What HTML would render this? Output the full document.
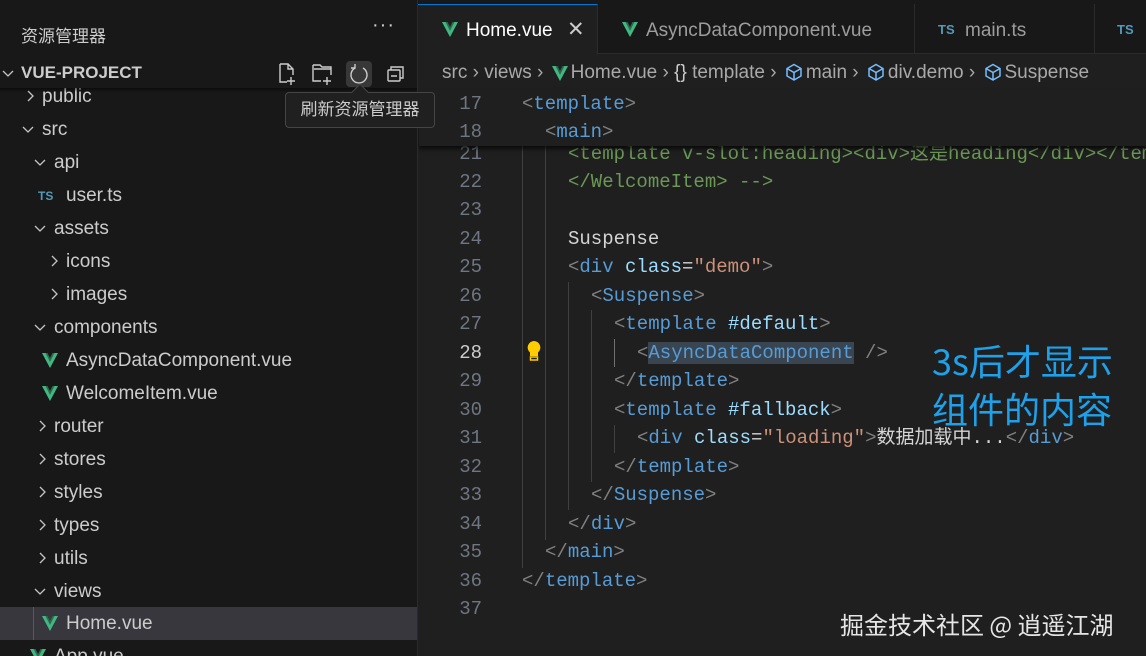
<!DOCTYPE html>
<html><head><meta charset="utf-8"><style>
*{margin:0;padding:0;box-sizing:border-box}
html,body{width:1146px;height:656px;overflow:hidden}
body{background:#1f1f1f;position:relative;font-family:"Liberation Sans","Noto Sans CJK SC",sans-serif;color:#cccccc}
.a{position:absolute;white-space:pre}
#side{position:absolute;left:0;top:0;width:418px;height:656px;background:#181818;border-right:1px solid #2b2b2b;overflow:hidden}
.row{position:absolute;left:0;width:417px;height:33px;line-height:33px;font-size:19px;color:#cccccc}
.chev{position:absolute;top:8px}
.ts{position:absolute;font-size:12px;font-weight:bold;color:#519aba;top:1px}
#ed{position:absolute;left:418px;top:0;width:728px;height:656px;overflow:hidden}
.code{position:absolute;left:0;height:28px;line-height:28px;font-family:"Liberation Mono","Noto Sans CJK SC",monospace;font-size:19px;white-space:pre}
.ln{position:absolute;width:64px;text-align:right;left:0;color:#6e7681}
.tx{position:absolute;left:104px;color:#d4d4d4}
.p{color:#808080}.t{color:#569cd6}.at{color:#9cdcfe}.s{color:#ce9178}.c{color:#6a9955}
.guide{position:absolute;width:1px;background:#404040}
.bi{display:inline-block;vertical-align:-3px;margin:0 3px}
</style></head><body>
<svg width="0" height="0" style="position:absolute"><defs>
<g id="vue"><polygon points="0,0 4,0 8,8 12,0 16,0 8,15" fill="#41b883"/><polygon points="3.5,0 5.5,0 8,5 10.5,0 12.5,0 8,9" fill="#2e6b4e"/></g>
<path id="cr" d="M6 3l5 5-5 5" fill="none" stroke="#c5c5c5" stroke-width="1.3"/>
<path id="cd" d="M3 6l5 5 5-5" fill="none" stroke="#c5c5c5" stroke-width="1.3"/>
<g id="cube" fill="none" stroke="#75beff" stroke-width="1.5"><path d="M9 1.5l7 4v7.5l-7 4-7-4V5.5zM2 5.5l7 4 7-4M9 9.5v7.5"/></g>
</defs></svg>

<div id="side">
<div class="a" style="left:21px;top:22px;font-size:17px;color:#cccccc">资源管理器</div>
<div class="a" style="left:372px;top:14px;font-size:20px;color:#cccccc;letter-spacing:1px">···</div>
<svg class="a" style="left:0;top:65px" width="16" height="16"><use href="#cd"/></svg>
<div class="a" style="left:21px;top:63px;font-size:17px;font-weight:bold;color:#cccccc">VUE-PROJECT</div>
<svg class="a" style="left:276px;top:61px" width="130" height="26" viewBox="0 0 130 26" fill="none" stroke="#cccccc" stroke-width="1.4">
<path d="M4 3h8l5 5v6M4 3v18h7M12 3v5h5M15 16v8M11 20h8"/>
<path d="M37 4h7l2 2h9v8M37 4v16h8M38 8h17M51 16v8M47 20h8"/>
<rect x="70" y="0" width="26" height="26" rx="4" fill="#383838" stroke="none"/>
<path d="M87 7a8 8 0 1 1-8 0M79 3v4h-4"/>
<rect x="112" y="9" width="12" height="11" rx="1"/><path d="M115 9V6h12v11h-3M115 15h6"/>
</svg>

<div class="row" style="top:80px"><svg class="chev" style="left:22px" width="16" height="16"><use href="#cr"/></svg><span class="a" style="left:42px">public</span></div>
<div class="row" style="top:113px"><svg class="chev" style="left:20px" width="16" height="16"><use href="#cd"/></svg><span class="a" style="left:42px">src</span></div>
<div class="row" style="top:146px"><svg class="chev" style="left:32px" width="16" height="16"><use href="#cd"/></svg><span class="a" style="left:54px">api</span></div>
<div class="row" style="top:179px"><span class="ts" style="left:38px">TS</span><span class="a" style="left:66px">user.ts</span></div>
<div class="row" style="top:212px"><svg class="chev" style="left:32px" width="16" height="16"><use href="#cd"/></svg><span class="a" style="left:54px">assets</span></div>
<div class="row" style="top:245px"><svg class="chev" style="left:46px" width="16" height="16"><use href="#cr"/></svg><span class="a" style="left:66px">icons</span></div>
<div class="row" style="top:278px"><svg class="chev" style="left:46px" width="16" height="16"><use href="#cr"/></svg><span class="a" style="left:66px">images</span></div>
<div class="row" style="top:311px"><svg class="chev" style="left:32px" width="16" height="16"><use href="#cd"/></svg><span class="a" style="left:54px">components</span></div>
<div class="row" style="top:344px"><svg class="a" style="left:42px;top:9px" width="16" height="15"><use href="#vue"/></svg><span class="a" style="left:66px">AsyncDataComponent.vue</span></div>
<div class="row" style="top:377px"><svg class="a" style="left:42px;top:9px" width="16" height="15"><use href="#vue"/></svg><span class="a" style="left:66px">WelcomeItem.vue</span></div>
<div class="row" style="top:410px"><svg class="chev" style="left:34px" width="16" height="16"><use href="#cr"/></svg><span class="a" style="left:54px">router</span></div>
<div class="row" style="top:443px"><svg class="chev" style="left:34px" width="16" height="16"><use href="#cr"/></svg><span class="a" style="left:54px">stores</span></div>
<div class="row" style="top:476px"><svg class="chev" style="left:34px" width="16" height="16"><use href="#cr"/></svg><span class="a" style="left:54px">styles</span></div>
<div class="row" style="top:509px"><svg class="chev" style="left:34px" width="16" height="16"><use href="#cr"/></svg><span class="a" style="left:54px">types</span></div>
<div class="row" style="top:542px"><svg class="chev" style="left:34px" width="16" height="16"><use href="#cr"/></svg><span class="a" style="left:54px">utils</span></div>
<div class="row" style="top:575px"><svg class="chev" style="left:32px" width="16" height="16"><use href="#cd"/></svg><span class="a" style="left:54px">views</span></div>
<div class="row" style="top:607px;background:#37373d"><span style="position:absolute;left:33px;top:0;width:1px;height:33px;background:#585858"></span><svg class="a" style="left:42px;top:9px" width="16" height="15"><use href="#vue"/></svg><span class="a" style="left:66px">Home.vue</span></div>
<div class="row" style="top:640px"><svg class="a" style="left:30px;top:9px" width="16" height="15"><use href="#vue"/></svg><span class="a" style="left:54px">App.vue</span></div>
<div style="position:absolute;left:0;top:88px;width:417px;height:4px;background:linear-gradient(#0008,#0000)"></div>
</div>

<div id="ed">
<!-- tabs -->
<div class="a" style="left:0;top:0;width:728px;height:54px;background:#181818;border-bottom:1px solid #2b2b2b"></div>
<div class="a" style="left:0;top:4px;width:180px;height:51px;background:#1f1f1f;border-top:1px solid #0078d4;border-right:1px solid #2b2b2b"></div>
<svg class="a" style="left:24px;top:22px" width="16" height="15"><use href="#vue"/></svg>
<div class="a" style="left:48px;top:20px;font-size:19px;color:#ffffff">Home.vue</div>
<div class="a" style="left:149px;top:17px;font-size:21px;color:#cccccc">✕</div>
<div class="a" style="left:180px;top:4px;width:317px;height:50px;border-right:1px solid #2b2b2b"></div>
<svg class="a" style="left:204px;top:22px" width="16" height="15"><use href="#vue"/></svg>
<div class="a" style="left:228px;top:20px;font-size:19px;color:#9d9d9d">AsyncDataComponent.vue</div>
<div class="a" style="left:497px;top:4px;width:180px;height:50px;border-right:1px solid #2b2b2b"></div>
<div class="a" style="left:520px;top:22px;font-size:13px;font-weight:bold;color:#519aba">TS</div>
<div class="a" style="left:547px;top:20px;font-size:19px;color:#9d9d9d">main.ts</div>
<div class="a" style="left:699px;top:22px;font-size:13px;font-weight:bold;color:#519aba">TS</div>

<!-- breadcrumb -->
<div class="a" style="left:24px;top:62px;font-size:19px;color:#a9a9a9">src › views › <svg class="bi" width="16" height="15"><use href="#vue"/></svg>Home.vue › <span style="color:#cccccc">{}</span> template › <svg class="bi" width="18" height="18"><use href="#cube"/></svg>main › <svg class="bi" width="18" height="18"><use href="#cube"/></svg>div.demo › <svg class="bi" width="18" height="18"><use href="#cube"/></svg>Suspense</div>

<!-- guides -->
<div class="guide" style="left:104px;top:146px;height:422px"></div>
<div class="guide" style="left:127px;top:146px;height:394px"></div>
<div class="guide" style="left:150px;top:282px;height:228px"></div>
<div class="guide" style="left:173px;top:310px;height:172px"></div>
<div class="guide" style="left:196px;top:339px;height:28px;background:#707070"></div>
<div class="guide" style="left:196px;top:425px;height:28px"></div>

<div class="code" style="top:140px"><span class="ln">21</span><span class="tx c" style="left:150px">&lt;template v-slot:heading&gt;&lt;div&gt;这是heading&lt;/div&gt;&lt;/template&gt;</span></div>
<div class="code" style="top:168px"><span class="ln">22</span><span class="tx c" style="left:150px">&lt;/WelcomeItem&gt; --&gt;</span></div>
<div class="code" style="top:196px"><span class="ln">23</span></div>
<div class="code" style="top:225px"><span class="ln">24</span><span class="tx" style="left:150px">Suspense</span></div>
<div class="code" style="top:253px"><span class="ln">25</span><span class="tx" style="left:150px"><span class="p">&lt;</span><span class="t">div</span> <span class="at">class</span>=<span class="s">"demo"</span><span class="p">&gt;</span></span></div>
<div class="code" style="top:282px"><span class="ln">26</span><span class="tx" style="left:173px"><span class="p">&lt;</span><span class="t">Suspense</span><span class="p">&gt;</span></span></div>
<div class="code" style="top:310px"><span class="ln">27</span><span class="tx" style="left:196px"><span class="p">&lt;</span><span class="t">template</span> <span class="at">#default</span><span class="p">&gt;</span></span></div>
<div class="code" style="top:339px"><span class="ln" style="color:#cccccc">28</span><span class="tx" style="left:219px"><span class="p">&lt;</span><span class="t" style="background:#3a4552">AsyncDataComponent</span> <span class="p">/&gt;</span></span></div>
<div class="code" style="top:367px"><span class="ln">29</span><span class="tx" style="left:196px"><span class="p">&lt;/</span><span class="t">template</span><span class="p">&gt;</span></span></div>
<div class="code" style="top:396px"><span class="ln">30</span><span class="tx" style="left:196px"><span class="p">&lt;</span><span class="t">template</span> <span class="at">#fallback</span><span class="p">&gt;</span></span></div>
<div class="code" style="top:424px"><span class="ln">31</span><span class="tx" style="left:219px"><span class="p">&lt;</span><span class="t">div</span> <span class="at">class</span>=<span class="s">"loading"</span><span class="p">&gt;</span>数据加载中...<span class="p">&lt;/</span><span class="t">div</span><span class="p">&gt;</span></span></div>
<div class="code" style="top:453px"><span class="ln">32</span><span class="tx" style="left:196px"><span class="p">&lt;/</span><span class="t">template</span><span class="p">&gt;</span></span></div>
<div class="code" style="top:481px"><span class="ln">33</span><span class="tx" style="left:173px"><span class="p">&lt;/</span><span class="t">Suspense</span><span class="p">&gt;</span></span></div>
<div class="code" style="top:510px"><span class="ln">34</span><span class="tx" style="left:150px"><span class="p">&lt;/</span><span class="t">div</span><span class="p">&gt;</span></span></div>
<div class="code" style="top:538px"><span class="ln">35</span><span class="tx" style="left:127px"><span class="p">&lt;/</span><span class="t">main</span><span class="p">&gt;</span></span></div>
<div class="code" style="top:567px"><span class="ln">36</span><span class="tx"><span class="p">&lt;/</span><span class="t">template</span><span class="p">&gt;</span></span></div>
<div class="code" style="top:595px"><span class="ln">37</span></div>

<svg class="a" style="left:108px;top:340px" width="16" height="22" viewBox="0 0 16 22"><path d="M8 1a6.5 6.5 0 0 0-4 11.5V16h8v-3.5A6.5 6.5 0 0 0 8 1z" fill="#ffcc00"/><rect x="4.5" y="17" width="7" height="3" fill="none" stroke="#ffcc00" stroke-width="1.5"/></svg>

<!-- sticky scroll -->
<div class="a" style="left:1px;top:90px;width:727px;height:56px;background:#1f1f1f;box-shadow:0 3px 4px #000a"></div>
<div class="code" style="top:90px"><span class="ln">17</span><span class="tx"><span class="p">&lt;</span><span class="t">template</span><span class="p">&gt;</span></span></div>
<div class="code" style="top:118px"><span class="ln">18</span><span class="tx" style="left:127px"><span class="p">&lt;</span><span class="t">main</span><span class="p">&gt;</span></span></div>

<div class="a" style="left:514px;top:336px;font-size:36px;line-height:48px;color:#1ea1ea;font-family:'Noto Sans CJK SC',sans-serif">3s后才显示
组件的内容</div>
<div class="a" style="left:422px;top:606px;font-size:24px;color:#e6e6e6;font-family:'Noto Sans CJK SC',sans-serif">掘金技术社区 @ 逍遥江湖</div>
</div>

<div class="a" style="left:285px;top:92px;width:150px;height:36px;background:#202020;border:1px solid #454545;border-radius:4px;font-size:17px;line-height:34px;text-align:center;color:#cccccc">刷新资源管理器</div>
<div class="a" style="left:354px;top:86px;width:12px;height:12px;background:#202020;border-left:1px solid #454545;border-top:1px solid #454545;transform:rotate(45deg)"></div>
</body></html>
